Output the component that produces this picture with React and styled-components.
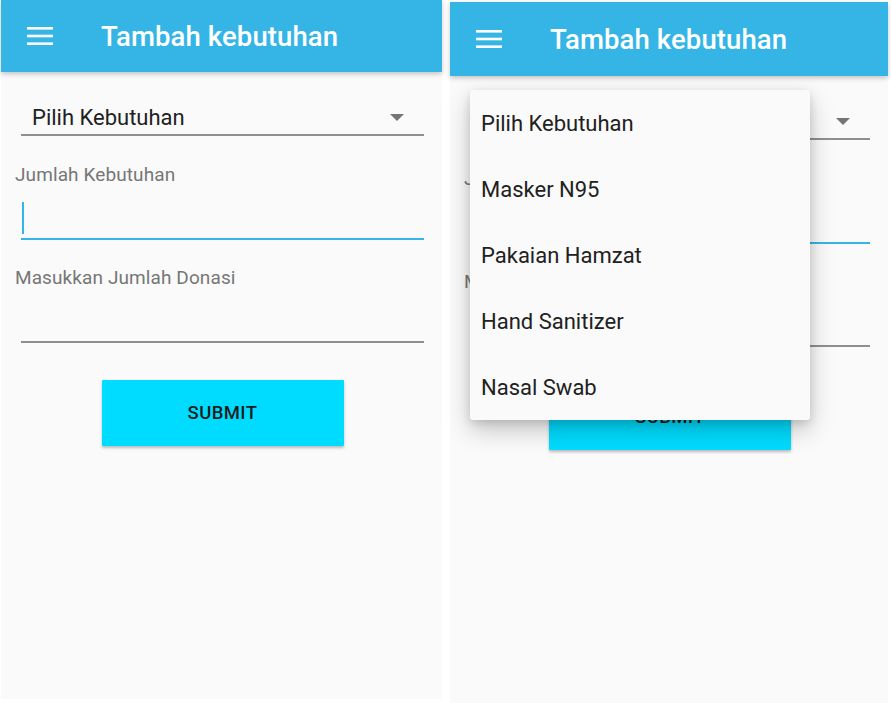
import React from "react";
import styled, { createGlobalStyle } from "styled-components";

const Global = createGlobalStyle`
  html, body { margin: 0; padding: 0; background: #ffffff; }
  body { font-family: Roboto, "Noto Sans", Arial, sans-serif; }
  * { box-sizing: border-box; }
`;

const Screens = styled.div`
  display: flex;
  align-items: flex-start;
  gap: 8px;
  padding-left: 1px;
  width: 891px;
  height: 703px;
  overflow: hidden;
`;

const Phone = styled.div`
  position: relative;
  display: flex;
  flex-direction: column;
  width: ${(p) => p.$width}px;
  height: ${(p) => p.$height}px;
  margin-top: ${(p) => p.$top}px;
  background: #fafafa;
`;

const AppBar = styled.header`
  display: flex;
  align-items: center;
  height: ${(p) => p.$height}px;
  padding-left: 26px;
  background: #35b5e5;
  box-shadow: 0 2px 5px rgba(0, 0, 0, 0.22);
  flex-shrink: 0;
  position: relative;
  z-index: 1;
`;

const Menu = styled.svg`
  display: block;
  width: 26px;
  height: 20px;
  margin-right: 48px;
`;

const Title = styled.h1`
  margin: 0;
  color: #ffffff;
  font-family: Roboto, sans-serif;
  font-weight: 500;
  font-size: 27.5px;
  letter-spacing: 0.1px;
`;

const Form = styled.div`
  display: flex;
  flex-direction: column;
  padding: 0 18px 0 14px;
`;

const Spinner = styled.div`
  display: flex;
  align-items: center;
  justify-content: space-between;
  height: 40px;
  margin: 24px 0 0 6px;
  padding: 5px 20px 0 11px;
  border-bottom: 2px solid #8f8f8f;
  color: #212121;
  font-size: 22px;
`;

const Arrow = styled.span`
  width: 0;
  height: 0;
  border-left: 7px solid transparent;
  border-right: 7px solid transparent;
  border-top: 7px solid #757575;
`;

const Label = styled.label`
  display: block;
  margin-top: ${(p) => p.$gap}px;
  color: #767676;
  font-size: 19px;
  line-height: 22px;
  letter-spacing: 0.1px;
`;

const Input = styled.div`
  display: flex;
  align-items: flex-start;
  height: 42px;
  margin: 12px 0 0 6px;
  border-bottom: 2px solid ${(p) => (p.$focused ? "#35b5e5" : "#8f8f8f")};
`;

const Caret = styled.span`
  width: 2px;
  height: 32px;
  margin: 4px 0 0 1px;
  background: #35b5e5;
`;

const Submit = styled.button`
  align-self: center;
  width: 242px;
  height: 66px;
  margin-top: 37px;
  margin-left: 2px;
  border: none;
  border-radius: 1px;
  background: #00dcff;
  color: #1c1c1c;
  font-family: Roboto, sans-serif;
  font-weight: 500;
  font-size: 18.5px;
  letter-spacing: 0.4px;
  box-shadow: 0 2px 3px rgba(0, 0, 0, 0.25);
`;

const Dropdown = styled.ul`
  position: absolute;
  top: 88px;
  left: 20px;
  width: 340px;
  margin: 0;
  padding: 0;
  list-style: none;
  background: #fafafa;
  border-radius: 3px;
  box-shadow: 0 10px 24px rgba(0, 0, 0, 0.22), 0 3px 8px rgba(0, 0, 0, 0.12);
  z-index: 2;
`;

const Option = styled.li`
  display: flex;
  align-items: center;
  height: 66px;
  padding-left: 11px;
  color: #212121;
  font-size: 22px;
`;

const Hamburger = () => (
  <Menu viewBox="0 0 26 20">
    <rect x="0" y="1" width="26" height="2.6" fill="#fff" />
    <rect x="0" y="8.7" width="26" height="2.6" fill="#fff" />
    <rect x="0" y="16.4" width="26" height="2.6" fill="#fff" />
  </Menu>
);

const options = ["Pilih Kebutuhan", "Masker N95", "Pakaian Hamzat", "Hand Sanitizer", "Nasal Swab"];

const Screen = ({ width, height, top, barHeight, open }) => (
  <Phone $width={width} $height={height} $top={top}>
    <AppBar $height={barHeight}>
      <Hamburger />
      <Title>Tambah kebutuhan</Title>
    </AppBar>
    <Form>
      <Spinner>
        <span>Pilih Kebutuhan</span>
        <Arrow />
      </Spinner>
      <Label $gap={28}>Jumlah Kebutuhan</Label>
      <Input $focused>
        <Caret />
      </Input>
      <Label $gap={27}>Masukkan Jumlah Donasi</Label>
      <Input />
    </Form>
    <Submit>SUBMIT</Submit>
    {open && (
      <Dropdown>
        {options.map((o) => (
          <Option key={o}>{o}</Option>
        ))}
      </Dropdown>
    )}
  </Phone>
);

export default function App() {
  return (
    <>
      <Global />
      <Screens>
        <Screen width={441} height={699} top={0} barHeight={72} />
        <Screen width={438} height={701} top={2} barHeight={74} open />
      </Screens>
    </>
  );
}
